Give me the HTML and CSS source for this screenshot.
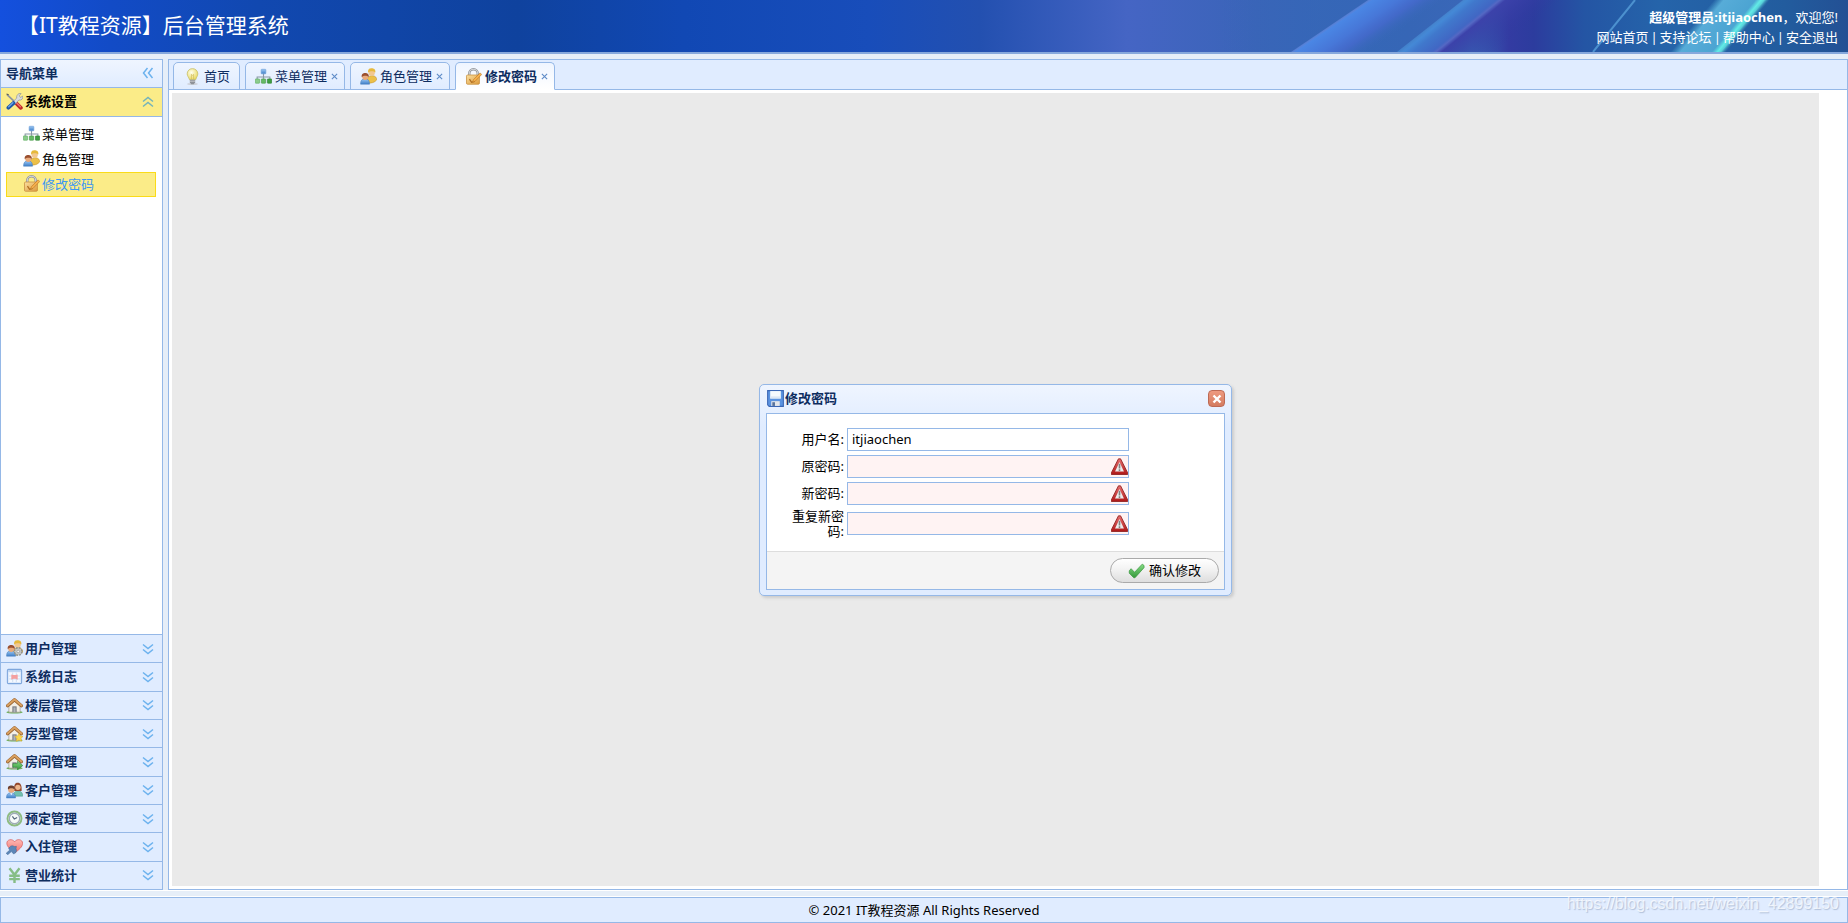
FILE: index.html
```html
<!DOCTYPE html>
<html lang="zh-CN">
<head>
<meta charset="utf-8">
<title>后台管理系统</title>
<link rel="stylesheet" href="styles.css">
</head>
<body>
<svg class="defs" aria-hidden="true">
  <defs>
    <linearGradient id="gBlue" x1="0" y1="0" x2="0" y2="1"><stop offset="0" stop-color="#9cc8f4"/><stop offset="1" stop-color="#3f7fc8"/></linearGradient>
    <linearGradient id="gGold" x1="0" y1="0" x2="1" y2="1"><stop offset="0" stop-color="#fbe0a0"/><stop offset="1" stop-color="#dd9a3c"/></linearGradient>
    <linearGradient id="gGreen" x1="0" y1="0" x2="0" y2="1"><stop offset="0" stop-color="#86dc86"/><stop offset="1" stop-color="#35993a"/></linearGradient>
    <linearGradient id="gRed" x1="0" y1="0" x2="0" y2="1"><stop offset="0" stop-color="#e87070"/><stop offset="1" stop-color="#b01818"/></linearGradient>
    <radialGradient id="gBulb" cx=".4" cy=".35" r=".7"><stop offset="0" stop-color="#fffff0"/><stop offset="1" stop-color="#e8d858"/></radialGradient>
    <linearGradient id="gHeart" x1="0" y1="0" x2="0" y2="1"><stop offset="0" stop-color="#ffb8b4"/><stop offset="1" stop-color="#f0706c"/></linearGradient>
    <symbol id="i-bulb" viewBox="0 0 16 16">
      <ellipse cx="8" cy="15" rx="5" ry="1" fill="#ccd0d8"/>
      <path d="M8 .6a4.9 4.9 0 0 1 5 4.900c0 2.100-1.300 3-2 5.500H5.200C4.500 8.500 3 7.600 3 5.500A4.900 4.900 0 0 1 8 .6z" fill="url(#gBulb)" stroke="#c9c06c" stroke-width=".8"/>
      <path d="M7 10.500V6l1 1 1-1v4.500" fill="none" stroke="#d0b850" stroke-width=".6"/>
      <path d="M5.500 11h5v2.500l-1.300 1.700H6.800l-1.300-1.700z" fill="#8f9298"/><path d="M5.500 12.400h5" stroke="#d9dbdf" stroke-width=".7"/>
    </symbol>
    <symbol id="i-tree" viewBox="0 0 16 16">
      <path d="M8 5v5M2 11V8.500h12V11" fill="none" stroke="#8a97a5"/>
      <rect x="5.800" y="1.200" width="4.400" height="4.300" rx=".6" fill="url(#gBlue)" stroke="#6d9fd8" stroke-width=".6"/>
      <rect x=".3" y="10.300" width="4" height="4" rx=".4" fill="#8ccc8c" stroke="#5fae60" stroke-width=".6"/>
      <rect x="6" y="10.300" width="4" height="4" rx=".4" fill="#66ba66" stroke="#489c4a" stroke-width=".6"/>
      <rect x="11.700" y="10.300" width="4" height="4" rx=".4" fill="#3f9e42" stroke="#2c8230" stroke-width=".6"/>
    </symbol>
    <symbol id="i-role" viewBox="0 0 16 16">
      <path d="M6.500 14c0-4.500 1.500-6.800 4.800-6.800s4.500 2 4.400 4c-1.500 2.400-6 3.600-9.200 2.800z" fill="#ecc048" stroke="#c0902c" stroke-width=".5"/>
      <circle cx="11" cy="4.300" r="3" fill="#f2c890"/><path d="M7.700 4.300C7.200.8 9.300.3 11 .3s4 .8 3.400 4C13 2.800 9.500 2.600 7.700 4.300z" fill="#e6b93c"/>
      <path d="M.5 15.200c0-3.400 1.300-5 4.200-5S9 11.800 9 15.200z" fill="url(#gBlue)" stroke="#4a80bd" stroke-width=".5"/>
      <circle cx="4.900" cy="8.300" r="2.900" fill="#e8aa7c"/><path d="M1.700 8.700C1.100 5.500 3 4.600 4.900 4.600s3.900 1 3.300 4.100c-1.500-1.700-4.700-1.900-6.500 0z" fill="#9a5030"/>
    </symbol>
    <symbol id="i-user" viewBox="0 0 16 16">
      <use href="#i-role"/>
      <circle cx="11.500" cy="10.800" r="3.300" fill="#d2d4d2" stroke="#8e918e" stroke-width="1.800" stroke-dasharray="1.700 .9"/><circle cx="11.500" cy="10.800" r="2.800" fill="#c4c6c4"/><circle cx="11.500" cy="10.800" r="1.200" fill="#f4f4f4" stroke="#8c8f8c" stroke-width=".6"/>
    </symbol>
    <symbol id="i-lock" viewBox="0 0 16 16">
      <path d="M4 8V5.200a4 4 0 0 1 8 0V7" fill="none" stroke="#8e9298" stroke-width="2.300"/><path d="M4 8V5.200a4 4 0 0 1 8 0V7" fill="none" stroke="#d5d8db" stroke-width="1"/>
      <rect x="1.400" y="6.600" width="12.200" height="8.700" rx="1" fill="url(#gGold)" stroke="#c68c3a" stroke-width=".7"/>
      <path d="M4.200 10.500l2 3 3-1" fill="none" stroke="#b06e22" stroke-width="1.200"/>
      <path d="M14.200 4.600l1.500 1.500-6.200 6.400-2.300.8.700-2.300z" fill="#f6b04c" stroke="#bb7724" stroke-width=".6"/>
    </symbol>
    <symbol id="i-tools" viewBox="0 0 16 16">
      <path d="M1 1.500l9 8.500" stroke="#8d959f" stroke-width="1.600"/><path d="M.5 .9l2 .7" stroke="#555" stroke-width="1"/>
      <path d="M9.300 9.300l4.700 4.600" stroke="#c02a28" stroke-width="3.600" stroke-linecap="round"/><path d="M9.600 9l4 4" stroke="#ef7770" stroke-width="1.200" stroke-linecap="round"/>
      <path d="M10.300 2.500c1-1.900 2.400-2.400 3.900-2L12.500 2.600l1 1.600 2.400-1.300c.2 2.500-1.200 4.200-3.800 3.700L8 11 5.800 8.900l4.300-4.100c-.2-.8-.1-1.600.2-2.300z" fill="#d8dbdf" stroke="#868d95" stroke-width=".6"/>
      <path d="M7 9.500l-4.700 4.300" stroke="#1f57a8" stroke-width="3.600" stroke-linecap="round"/><path d="M6.500 9.200l-4 3.700" stroke="#6ba5e8" stroke-width="1.200" stroke-linecap="round"/>
    </symbol>
    <symbol id="i-log" viewBox="0 0 16 16">
      <rect x="1.300" y="1.300" width="13.400" height="13.400" rx="1" fill="#dfeafa" stroke="#7ea6dc"/>
      <path d="M2 2h12v1.500H2z" fill="#b4cff0"/><rect x="3" y="4.300" width="10" height="8.900" fill="#f5f9ff"/>
      <path d="M3 7.500h10M3 10.300h10M6.300 4.300v8.900M9.700 4.300v8.900" stroke="#bad0ec" stroke-width=".6"/>
      <path d="M5 6l2 .7h2L11 6v5l-2-.8H7L5 11z" fill="#f4a0a0"/>
    </symbol>
    <symbol id="i-house" viewBox="0 0 16 16">
      <ellipse cx="8" cy="14.300" rx="7.700" ry="1.300" fill="#6fae58"/>
      <path d="M2.700 7.500L8 3l5.300 4.500v6.800H2.700z" fill="#f3efe6" stroke="#a29c90" stroke-width=".7"/>
      <path d="M6 8.800h4v5.500H6z" fill="#777b83"/><path d="M7 9.800h2v4.500H7z" fill="#b0b4ba"/>
      <path d="M1.500 8.300L8 2.600l6.500 5.700" fill="none" stroke="#996330" stroke-width="3" stroke-linejoin="round" stroke-linecap="round"/>
      <path d="M1.500 8L8 2.300 14.500 8" fill="none" stroke="#d9a060" stroke-width="1.800" stroke-linejoin="round" stroke-linecap="round"/>
    </symbol>
    <symbol id="i-housestar" viewBox="0 0 16 16"><use href="#i-house"/><path d="M12.200 7.800l1.200 2.500 2.600.4-1.900 1.900.5 2.800-2.400-1.300-2.500 1.300.5-2.800-1.900-1.900 2.700-.4z" fill="#fbd84a" stroke="#dfaa28" stroke-width=".5"/></symbol>
    <symbol id="i-housego" viewBox="0 0 16 16"><use href="#i-house"/><path d="M6.500 10h4.300V7.700l5 4.100-5 4.100v-2.500H6.500z" fill="url(#gGreen)" stroke="#35873a" stroke-width=".6"/></symbol>
    <symbol id="i-client" viewBox="0 0 16 16">
      <path d="M7 13.300c0-3.600 1.400-4.900 4.300-4.900s4.400 1.500 4.400 4.900z" fill="#72c0b0" stroke="#4b9888" stroke-width=".5"/>
      <path d="M7.700 8.400C7.300 3 8.300.8 11 .8s4 2.400 3.700 7.600z" fill="#94482c"/><circle cx="11.200" cy="5" r="2.500" fill="#edb68c"/>
      <path d="M.4 15c0-3.300 1.400-4.900 4.300-4.900S9 11.700 9 15z" fill="url(#gBlue)" stroke="#4a80bd" stroke-width=".5"/>
      <circle cx="5" cy="7" r="3" fill="#e8aa7c"/><path d="M1.900 7C1.400 4 3.100 3.200 5 3.200s3.700.9 3.100 3.800C6.600 5.500 3.700 5.300 1.900 7z" fill="#6d4030"/>
      <path d="M4 10.500l1 2 1-2z" fill="#fff"/>
    </symbol>
    <symbol id="i-clock" viewBox="0 0 16 16">
      <circle cx="8" cy="8" r="6.600" fill="#f7fbfa" stroke="#8dbb80" stroke-width="1.800"/><circle cx="8" cy="8" r="4.900" fill="none" stroke="#9eabb8" stroke-width="1.300"/>
      <path d="M6 6l1.800 2.400L10.500 7" fill="none" stroke="#566a7c" stroke-width="1.100"/>
    </symbol>
    <symbol id="i-heart" viewBox="0 0 16 16">
      <path d="M8.500 14C4 10.500.8 8.200.8 4.900.8 1.400 5.800.2 8.100 3.600 10.400.2 15.700 1.300 15.600 5c0 3.500-3.500 5.900-7.100 9z" fill="url(#gHeart)" stroke="#d95f5c" stroke-width=".7"/>
      <path d="M2.500 10.300c1-3 3.700-3.700 5.200-2.200l2.100-.2-.4 2.300c1.200 2.100.1 4-2.200 4.800L5 12.800 1.600 15.800.2 14.300l3.400-3z" fill="#5c86b8" stroke="#3f6898" stroke-width=".5"/>
    </symbol>
    <symbol id="i-yen" viewBox="0 0 16 16">
      <path d="M3.300 1.200L8 7.200l4.700-6M8 7v8M3 8.200h10M3 11.400h10" fill="none" stroke="#86bd86" stroke-width="2.300"/>
    </symbol>
    <symbol id="i-save" viewBox="0 0 16 16">
      <path d="M.6.6h14.800v14.800H2L.6 14z" fill="#5b93e0" stroke="#3b67b5"/>
      <path d="M3 1h10v7H3z" fill="#f6fafd"/><path d="M3 6h10v2H3z" fill="#dce7f4"/>
      <path d="M4 10.500h8V15H4z" fill="#e4e6ea"/><path d="M5 11.500h2.500V15H5z" fill="#56729c"/>
    </symbol>
    <symbol id="i-warn" viewBox="0 0 16 16">
      <path d="M7 .8h2L15.700 14v1.500H.3V14z" fill="url(#gRed)" stroke="#8e1c1c" stroke-width=".8" stroke-linejoin="round"/>
      <path d="M8 3.800l4.200 8.900H3.800z" fill="#ececec"/>
      <path d="M8 5.500v4.300M8 10.700v1.600" stroke="#808080" stroke-width="1.500"/>
    </symbol>
    <symbol id="i-ok" viewBox="0 0 16 16"><path d="M1.200 8.300l1.700-2 3.300 3.400L13.400 2l1.700 1.300v2L6.600 14.800H5.400L1.200 10.500z" fill="url(#gGreen)" stroke="#3c9a40" stroke-width=".7" stroke-linejoin="round"/></symbol>
    <symbol id="i-down" viewBox="0 0 12 12"><path d="M1 1.500l5 4 5-4M1 6.500l5 4 5-4" fill="none" stroke="#6cb2ee" stroke-width="1.500"/></symbol>
    <symbol id="i-up" viewBox="0 0 12 12"><path d="M1 5.500l5-4 5 4M1 10.500l5-4 5 4" fill="none" stroke="#74b3ba" stroke-width="1.500"/></symbol>
    <symbol id="i-left" viewBox="0 0 12 12"><path d="M5.500 1l-4 5 4 5M10.500 1l-4 5 4 5" fill="none" stroke="#6cb2ee" stroke-width="1.500"/></symbol>
    <symbol id="i-x" viewBox="0 0 8 8"><path d="M1 1l6 6M7 1L1 7" fill="none" stroke="#5f8cc8" stroke-width="1.300"/></symbol>
  </defs>
</svg>

<header class="top">
  <svg class="rays" viewBox="0 0 628 52" aria-hidden="true">
    <defs>
      <linearGradient id="ray1" gradientUnits="userSpaceOnUse" x1="148" y1="0" x2="225" y2="0" gradientTransform="skewX(-56)"><stop offset="0" stop-color="#7292e8" stop-opacity=".5"/><stop offset=".06" stop-color="#4a86e4"/><stop offset=".4" stop-color="#4777d8"/><stop offset=".65" stop-color="#466ace" stop-opacity=".8"/><stop offset="1" stop-color="#3868b8" stop-opacity="0"/></linearGradient>
      <linearGradient id="ray2" gradientUnits="userSpaceOnUse" x1="243" y1="0" x2="340" y2="0" gradientTransform="skewX(-51)"><stop offset="0" stop-color="#4c95dc" stop-opacity=".6"/><stop offset=".05" stop-color="#4488d6"/><stop offset=".14" stop-color="#4078cc"/><stop offset=".34" stop-color="#4167c4"/><stop offset=".38" stop-color="#5468c4"/><stop offset=".44" stop-color="#3c42aa"/><stop offset="1" stop-color="#3039a0" stop-opacity="0"/></linearGradient>
      <linearGradient id="ray3" gradientUnits="userSpaceOnUse" x1="494" y1="0" x2="550" y2="0" gradientTransform="skewX(-40)"><stop offset="0" stop-color="#4fa9d2" stop-opacity="0"/><stop offset=".18" stop-color="#57acd8"/><stop offset=".74" stop-color="#4ca4d2"/><stop offset=".84" stop-color="#62ece6"/><stop offset=".9" stop-color="#56cfd8"/><stop offset="1" stop-color="#3a80b0" stop-opacity="0"/></linearGradient>
      <linearGradient id="deep" x1="0" y1="0" x2="1" y2="0"><stop offset="0" stop-color="#3568b8" stop-opacity="0"/><stop offset=".3" stop-color="#3666b6"/><stop offset=".4" stop-color="#3a67b8"/><stop offset=".46" stop-color="#333ba2"/><stop offset=".5" stop-color="#2c3c9e"/><stop offset=".58" stop-color="#2455a4"/><stop offset=".7" stop-color="#2564aa"/><stop offset=".9" stop-color="#225c9e"/><stop offset="1" stop-color="#235094"/></linearGradient>
    </defs>
    <path d="M0 0h628v52H0z" fill="url(#deep)"/>
    <path d="M148 0h77l-77 52H71z" fill="url(#ray1)"/>
    <path d="M243 0h97l-64 52h-99z" fill="url(#ray2)"/>
    <path d="M415 0l-42 52" stroke="#4c91cf" stroke-width="2"/>
    <path d="M494 0h56l-44 52h-56z" fill="url(#ray3)"/>
  </svg>
  <h1 class="brand">【IT教程资源】后台管理系统</h1>
  <div class="account">
    <p><strong>超级管理员:itjiaochen</strong>，欢迎您!</p>
    <nav class="links"><a href="#">网站首页</a><span>|</span><a href="#">支持论坛</a><span>|</span><a href="#">帮助中心</a><span>|</span><a href="#">安全退出</a></nav>
  </div>
</header>

<div class="workspace">
  <aside class="sidebar">
    <div class="side-title"><span>导航菜单</span><button class="arrow" aria-label="折叠"><svg><use href="#i-left"/></svg></button></div>
    <button class="group group-open"><svg class="icon"><use href="#i-tools"/></svg><span>系统设置</span><svg class="chev"><use href="#i-up"/></svg></button>
    <ul class="menu">
      <li><a href="#"><svg class="icon"><use href="#i-tree"/></svg>菜单管理</a></li>
      <li><a href="#"><svg class="icon"><use href="#i-role"/></svg>角色管理</a></li>
      <li><a href="#" class="current"><svg class="icon"><use href="#i-lock"/></svg>修改密码</a></li>
    </ul>
    <div class="groups">
      <button class="group"><svg class="icon"><use href="#i-user"/></svg><span>用户管理</span><svg class="chev"><use href="#i-down"/></svg></button>
      <button class="group"><svg class="icon"><use href="#i-log"/></svg><span>系统日志</span><svg class="chev"><use href="#i-down"/></svg></button>
      <button class="group"><svg class="icon"><use href="#i-house"/></svg><span>楼层管理</span><svg class="chev"><use href="#i-down"/></svg></button>
      <button class="group"><svg class="icon"><use href="#i-housestar"/></svg><span>房型管理</span><svg class="chev"><use href="#i-down"/></svg></button>
      <button class="group"><svg class="icon"><use href="#i-housego"/></svg><span>房间管理</span><svg class="chev"><use href="#i-down"/></svg></button>
      <button class="group"><svg class="icon"><use href="#i-client"/></svg><span>客户管理</span><svg class="chev"><use href="#i-down"/></svg></button>
      <button class="group"><svg class="icon"><use href="#i-clock"/></svg><span>预定管理</span><svg class="chev"><use href="#i-down"/></svg></button>
      <button class="group"><svg class="icon"><use href="#i-heart"/></svg><span>入住管理</span><svg class="chev"><use href="#i-down"/></svg></button>
      <button class="group"><svg class="icon"><use href="#i-yen"/></svg><span>营业统计</span><svg class="chev"><use href="#i-down"/></svg></button>
    </div>
  </aside>

  <main class="center">
    <div class="tabs">
      <div class="tab tab-home"><button class="tab-name"><svg class="icon"><use href="#i-bulb"/></svg>首页</button></div>
      <div class="tab"><button class="tab-name"><svg class="icon"><use href="#i-tree"/></svg>菜单管理</button><button class="tab-x" aria-label="关闭"><svg><use href="#i-x"/></svg></button></div>
      <div class="tab"><button class="tab-name"><svg class="icon"><use href="#i-role"/></svg>角色管理</button><button class="tab-x" aria-label="关闭"><svg><use href="#i-x"/></svg></button></div>
      <div class="tab tab-active"><button class="tab-name"><svg class="icon"><use href="#i-lock"/></svg>修改密码</button><button class="tab-x" aria-label="关闭"><svg><use href="#i-x"/></svg></button></div>
    </div>
    <div class="stage">
      <form class="dialog">
        <div class="dialog-head"><svg class="icon"><use href="#i-save"/></svg><h2>修改密码</h2><button type="button" class="dialog-x" aria-label="关闭"><svg viewBox="0 0 10 10"><path d="M1.500 1.500l7 7M8.500 1.500l-7 7" stroke="#fff" stroke-width="2.400"/></svg></button></div>
        <div class="dialog-body">
          <div class="fields">
            <label for="user">用户名:</label><div class="field"><input id="user" type="text" value="itjiaochen" readonly></div>
            <label for="old">原密码:</label><div class="field invalid"><input id="old" type="password"><svg class="icon"><use href="#i-warn"/></svg></div>
            <label for="new">新密码:</label><div class="field invalid"><input id="new" type="password"><svg class="icon"><use href="#i-warn"/></svg></div>
            <label for="again">重复新密码:</label><div class="field invalid"><input id="again" type="password"><svg class="icon"><use href="#i-warn"/></svg></div>
          </div>
          <div class="actions"><button type="button" class="confirm"><svg class="icon"><use href="#i-ok"/></svg>确认修改</button></div>
        </div>
      </form>
    </div>
  </main>
</div>

<footer class="bottom">© 2021 IT教程资源 All Rights Reserved<span class="mark">https://blog.csdn.net/weixin_42899150</span></footer>
</body>
</html>
```
FILE: styles.css
```css
* { box-sizing: border-box; }
body {
  margin: 0;
  min-height: 100vh;
  display: flex;
  flex-direction: column;
  background: #e6eef8;
  font: 13px/16px "Noto Sans", "Noto Sans CJK SC", sans-serif;
  color: #000;
}
h1, h2, p, ul { margin: 0; padding: 0; }
button, input { font: inherit; color: inherit; }
button { background: none; border: 0; padding: 0; cursor: pointer; }
a { color: inherit; text-decoration: none; }
svg { display: block; flex: none; }
.defs { position: absolute; width: 0; height: 0; }
.icon { width: 17px; height: 17px; }

.top {
  position: relative;
  display: flex;
  justify-content: space-between;
  height: 54px;
  border-bottom: 2px solid #86a8dc;
  color: #fff;
  background: linear-gradient(90deg, #1450de 0, #124bc6 6%, #1148b0 14%, #0f429e 28%, #1148b4 37%, #184dba 47%, #2350b0 53%, #4565c4 61%, #3a64b8 68%, #3267b8 75%, #235094 100%);
}
.rays { position: absolute; right: 0; top: 0; width: 628px; height: 52px; }
.brand { padding: 10px 0 0 18px; font-size: 21px; line-height: 30px; font-weight: 400; }
.account { position: relative; padding: 7px 10px 0 0; text-align: right; line-height: 20px; }
.links { display: flex; justify-content: flex-end; gap: 2px; }

.workspace { flex: 1; display: flex; gap: 5px; padding-top: 5px; border-bottom: 1px solid #fff; }
.sidebar { width: 163px; flex: none; display: flex; flex-direction: column; border: 1px solid #95b8e7; background: #fff; }
.side-title {
  display: flex;
  align-items: center;
  justify-content: space-between;
  height: 28px;
  padding: 0 8px 2px 5px;
  border-bottom: 1px solid #95b8e7;
  background: linear-gradient(#eff5ff, #e0ecff);
  color: #0e2d5f;
  font-weight: 700;
}
.arrow svg, .chev { width: 12px; height: 12px; }
.group {
  display: flex;
  align-items: center;
  gap: 2px;
  padding: 0 8px 0 5px;
  border-top: 1px solid #95b8e7;
  background: #e0ecff;
  color: #0e2d5f;
  font-weight: 700;
}
.group span { flex: 1; padding-bottom: 1px; text-align: left; }
.group-open { height: 29px; padding-bottom: 1px; border-top: 0; border-bottom: 1px solid #95b8e7; background: #fbec88; color: #000; }
.groups { display: grid; grid-auto-rows: 1fr; height: 255px; }
.menu { flex: 1; list-style: none; padding: 5px 6px 5px 5px; }
.menu a { display: flex; align-items: center; gap: 2px; height: 25px; padding: 0 0 2px 16px; border: 1px solid transparent; }
.menu .current { background: #fbec88; border-color: #fadb19; color: #3b97f5; }

.center { flex: 1; min-width: 0; display: flex; flex-direction: column; border: 1px solid #95b8e7; background: #fff; }
.tabs { display: flex; gap: 5px; height: 30px; padding: 2px 4px 0; border-bottom: 1px solid #95b8e7; background: #e0ecff; }
.tab {
  display: flex;
  align-items: center;
  justify-content: space-between;
  width: 100px;
  height: 28px;
  padding: 0 6px 0 9px;
  border: 1px solid #95b8e7;
  border-radius: 5px 5px 0 0;
  background: linear-gradient(#eff5ff, #e0ecff);
  color: #0e2d5f;
}
.tab-home { width: 67px; padding-left: 10px; }
.tab-name { display: flex; align-items: center; gap: 3px; }
.tab-active { border-bottom-color: #fff; background: linear-gradient(#eff5ff, #fff); font-weight: 700; }
.tab-x svg { width: 7px; height: 7px; }
.stage { flex: 1; display: flex; align-items: center; justify-content: center; margin: 3px 28px 3px 3px; background: #eaeaea; }

.dialog {
  width: 473px;
  padding: 5px 6px;
  border: 1px solid #95b8e7;
  border-radius: 5px;
  background: linear-gradient(#eff5ff, #e0ecff 20%);
  box-shadow: 2px 2px 3px #ccc;
}
.dialog-head { display: flex; align-items: center; gap: 1px; height: 18px; margin-bottom: 5px; padding-left: 1px; color: #0e2d5f; }
.dialog-head h2 { flex: 1; padding-bottom: 2px; font-size: 13px; line-height: 16px; }
.dialog-x { display: grid; place-items: center; width: 17px; height: 17px; border: 1px solid #bd6a55; border-radius: 4px; background: linear-gradient(#ee9a80, #d47c60); }
.dialog-x svg { width: 10px; height: 10px; }
.dialog-body { border: 1px solid #95b8e7; background: #fff; }
.fields { display: grid; grid-template-columns: 57px 282px; column-gap: 3px; row-gap: 4px; align-items: center; padding: 14px 0 12px 20px; }
.fields label { text-align: right; line-height: 15px; word-break: break-all; }
.field { position: relative; height: 23px; }
.field input { display: block; width: 100%; height: 100%; padding: 0 4px; border: 1px solid #95b8e7; border-radius: 0; background: #fff; outline: 0; }
.invalid input { background: #fff3f3; padding-right: 20px; }
.invalid .icon { position: absolute; right: 1px; top: 3px; }
.actions { display: flex; justify-content: flex-end; padding: 6px 5px 6px 6px; border-top: 1px solid #ddd; background: #f4f4f4; }
.confirm {
  display: flex;
  align-items: center;
  justify-content: center;
  gap: 4px;
  width: 109px;
  height: 25px;
  border: 1px solid #aaa;
  border-radius: 13px;
  background: linear-gradient(#fff, #f4f4f4 40%, #dedede);
}

.bottom {
  position: relative;
  margin-top: 6px;
  height: 26px;
  border: 1px solid #95b8e7;
  box-shadow: 0 -1px #fff;
  background: #e0ecff;
  text-align: center;
  line-height: 24px;
}
.mark { position: absolute; right: 8px; top: -6px; font: 16px/24px "Liberation Sans", sans-serif; color: rgba(255, 255, 255, .7); text-shadow: 1px 1px 1px rgba(120, 140, 170, .45); }
```
